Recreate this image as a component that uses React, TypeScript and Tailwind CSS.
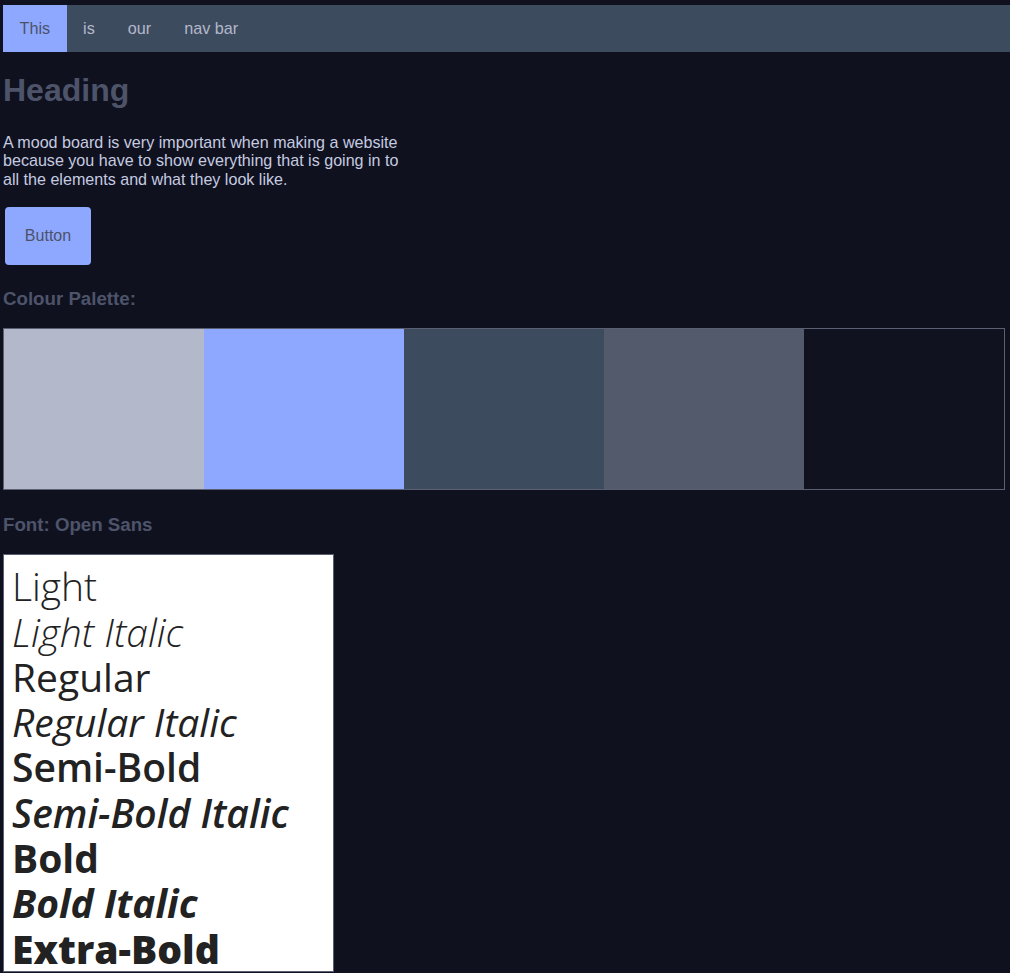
import React from "react";

const weights: { label: string; cls: string }[] = [
  { label: "Light", cls: "font-light" },
  { label: "Light Italic", cls: "font-light italic" },
  { label: "Regular", cls: "font-normal" },
  { label: "Regular Italic", cls: "font-normal italic" },
  { label: "Semi-Bold", cls: "font-semibold" },
  { label: "Semi-Bold Italic", cls: "font-semibold italic" },
  { label: "Bold", cls: "font-bold" },
  { label: "Bold Italic", cls: "font-bold italic" },
  { label: "Extra-Bold", cls: "font-extrabold" },
];

export default function App() {
  return (
    <div className="min-h-screen bg-[#10111f] pt-[5px] pl-[3px] font-['Liberation_Sans',Arial,sans-serif] overflow-hidden">
      <nav className="flex h-[47px] bg-[#3d4b5e] text-[16.2px]">
        <a className="flex items-center px-[16.5px] bg-[#8fa8ff] text-[#4b5268]">This</a>
        <a className="flex items-center px-[16.5px] text-[#b3b8cb]">is</a>
        <a className="flex items-center px-[16.5px] text-[#b3b8cb]">our</a>
        <a className="flex items-center px-[16.5px] text-[#b3b8cb]">nav bar</a>
      </nav>
      <h1 className="mt-[20px] text-[32px] font-bold leading-[37px] text-[#4d546a]">Heading</h1>
      <p className="mt-[24px] w-[402px] text-[16.1px] leading-[18.4px] text-[#c5cbe0]">
        A mood board is very important when making a website because you have to show everything that is going in to all the elements and what they look like.
      </p>
      <button className="mt-[19px] ml-[2px] h-[58px] w-[86px] rounded-[4px] bg-[#8fa8ff] text-[16px] text-[#4b5268]">
        Button
      </button>
      <h3 className="mt-[23px] text-[18.7px] font-bold leading-[21px] text-[#4d546a]">Colour Palette:</h3>
      <div className="mt-[19px] flex w-[1002px] border border-[#5a6072]">
        <div className="h-[160px] w-[200px] bg-[#b3b8cb]" />
        <div className="h-[160px] w-[200px] bg-[#8fa8ff]" />
        <div className="h-[160px] w-[200px] bg-[#3d4b5e]" />
        <div className="h-[160px] w-[200px] bg-[#525a6b]" />
        <div className="h-[160px] w-[200px] bg-[#10121f]" />
      </div>
      <h3 className="mt-[24px] text-[18.7px] font-bold leading-[21px] text-[#4d546a]">Font: Open Sans</h3>
      <div className="mt-[19px] h-[418px] w-[331px] overflow-hidden border border-[#5a6072] bg-white pl-[8px] pt-[8px] font-['Open_Sans',sans-serif] text-[39px] leading-[45.3px] text-[#222222]">
        {weights.map((w) => (
          <div key={w.label} className={w.cls}>
            {w.label}
          </div>
        ))}
      </div>
    </div>
  );
}
